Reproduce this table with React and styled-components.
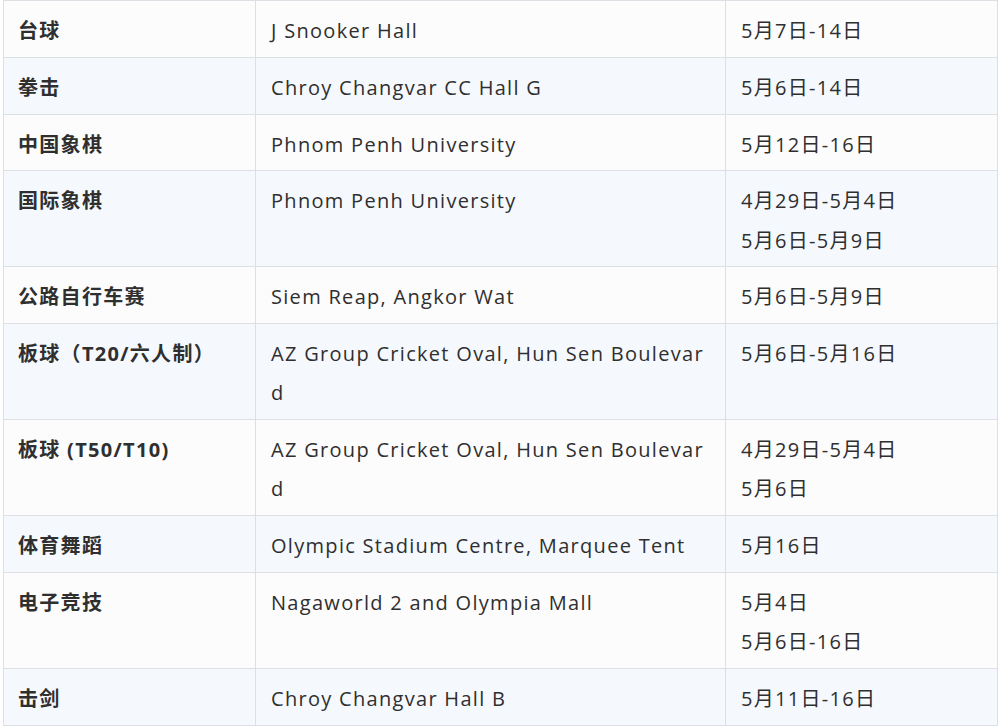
import React from "react";
import styled, { createGlobalStyle } from "styled-components";

const Global = createGlobalStyle`
  html, body { margin: 0; padding: 0; background: #ffffff; }
  body { font-family: "Open Sans", "Noto Sans CJK SC", sans-serif; }
`;

const Wrap = styled.div`
  padding: 0 3px;
`;

const Table = styled.table`
  width: 994px;
  border-collapse: collapse;
  table-layout: fixed;
  font-family: "Open Sans", "Noto Sans CJK SC", sans-serif;
  font-size: 20px;
  letter-spacing: 1.3px;
  color: #2f2f2f;
`;

const Row = styled.tr`
  background: ${(p) => (p.$alt ? "#f5f9fe" : "#fcfcfd")};
`;

const Cell = styled.td`
  border: 1px solid #dcdfe4;
  padding: 10px 12px 6.5px 15px;
  line-height: 39.25px;
  vertical-align: top;
  word-break: break-all;
  font-weight: ${(p) => (p.$bold ? 700 : 400)};
  padding-left: ${(p) => (p.$bold ? "14px" : "15px")};
`;

const Line = styled.div``;

const rows = [
  ["台球", "J Snooker Hall", ["5月7日-14日"]],
  ["拳击", "Chroy Changvar CC Hall G", ["5月6日-14日"]],
  ["中国象棋", "Phnom Penh University", ["5月12日-16日"]],
  ["国际象棋", "Phnom Penh University", ["4月29日-5月4日", "5月6日-5月9日"]],
  ["公路自行车赛", "Siem Reap, Angkor Wat", ["5月6日-5月9日"]],
  ["板球（T20/六人制）", "AZ Group Cricket Oval, Hun Sen Boulevard", ["5月6日-5月16日"]],
  ["板球 (T50/T10)", "AZ Group Cricket Oval, Hun Sen Boulevard", ["4月29日-5月4日", "5月6日"]],
  ["体育舞蹈", "Olympic Stadium Centre, Marquee Tent", ["5月16日"]],
  ["电子竞技", "Nagaworld 2 and Olympia Mall", ["5月4日", "5月6日-16日"]],
  ["击剑", "Chroy Changvar Hall B", ["5月11日-16日"]],
];

export default function App() {
  return (
    <>
      <Global />
      <Wrap>
        <Table>
          <colgroup>
            <col style={{ width: "252px" }} />
            <col style={{ width: "470px" }} />
            <col style={{ width: "272px" }} />
          </colgroup>
          <tbody>
            {rows.map((r, i) => (
              <Row key={i} $alt={i % 2 === 1}>
                <Cell $bold>{r[0]}</Cell>
                <Cell>{r[1]}</Cell>
                <Cell>
                  {r[2].map((d, j) => (
                    <Line key={j}>{d}</Line>
                  ))}
                </Cell>
              </Row>
            ))}
          </tbody>
        </Table>
      </Wrap>
    </>
  );
}
